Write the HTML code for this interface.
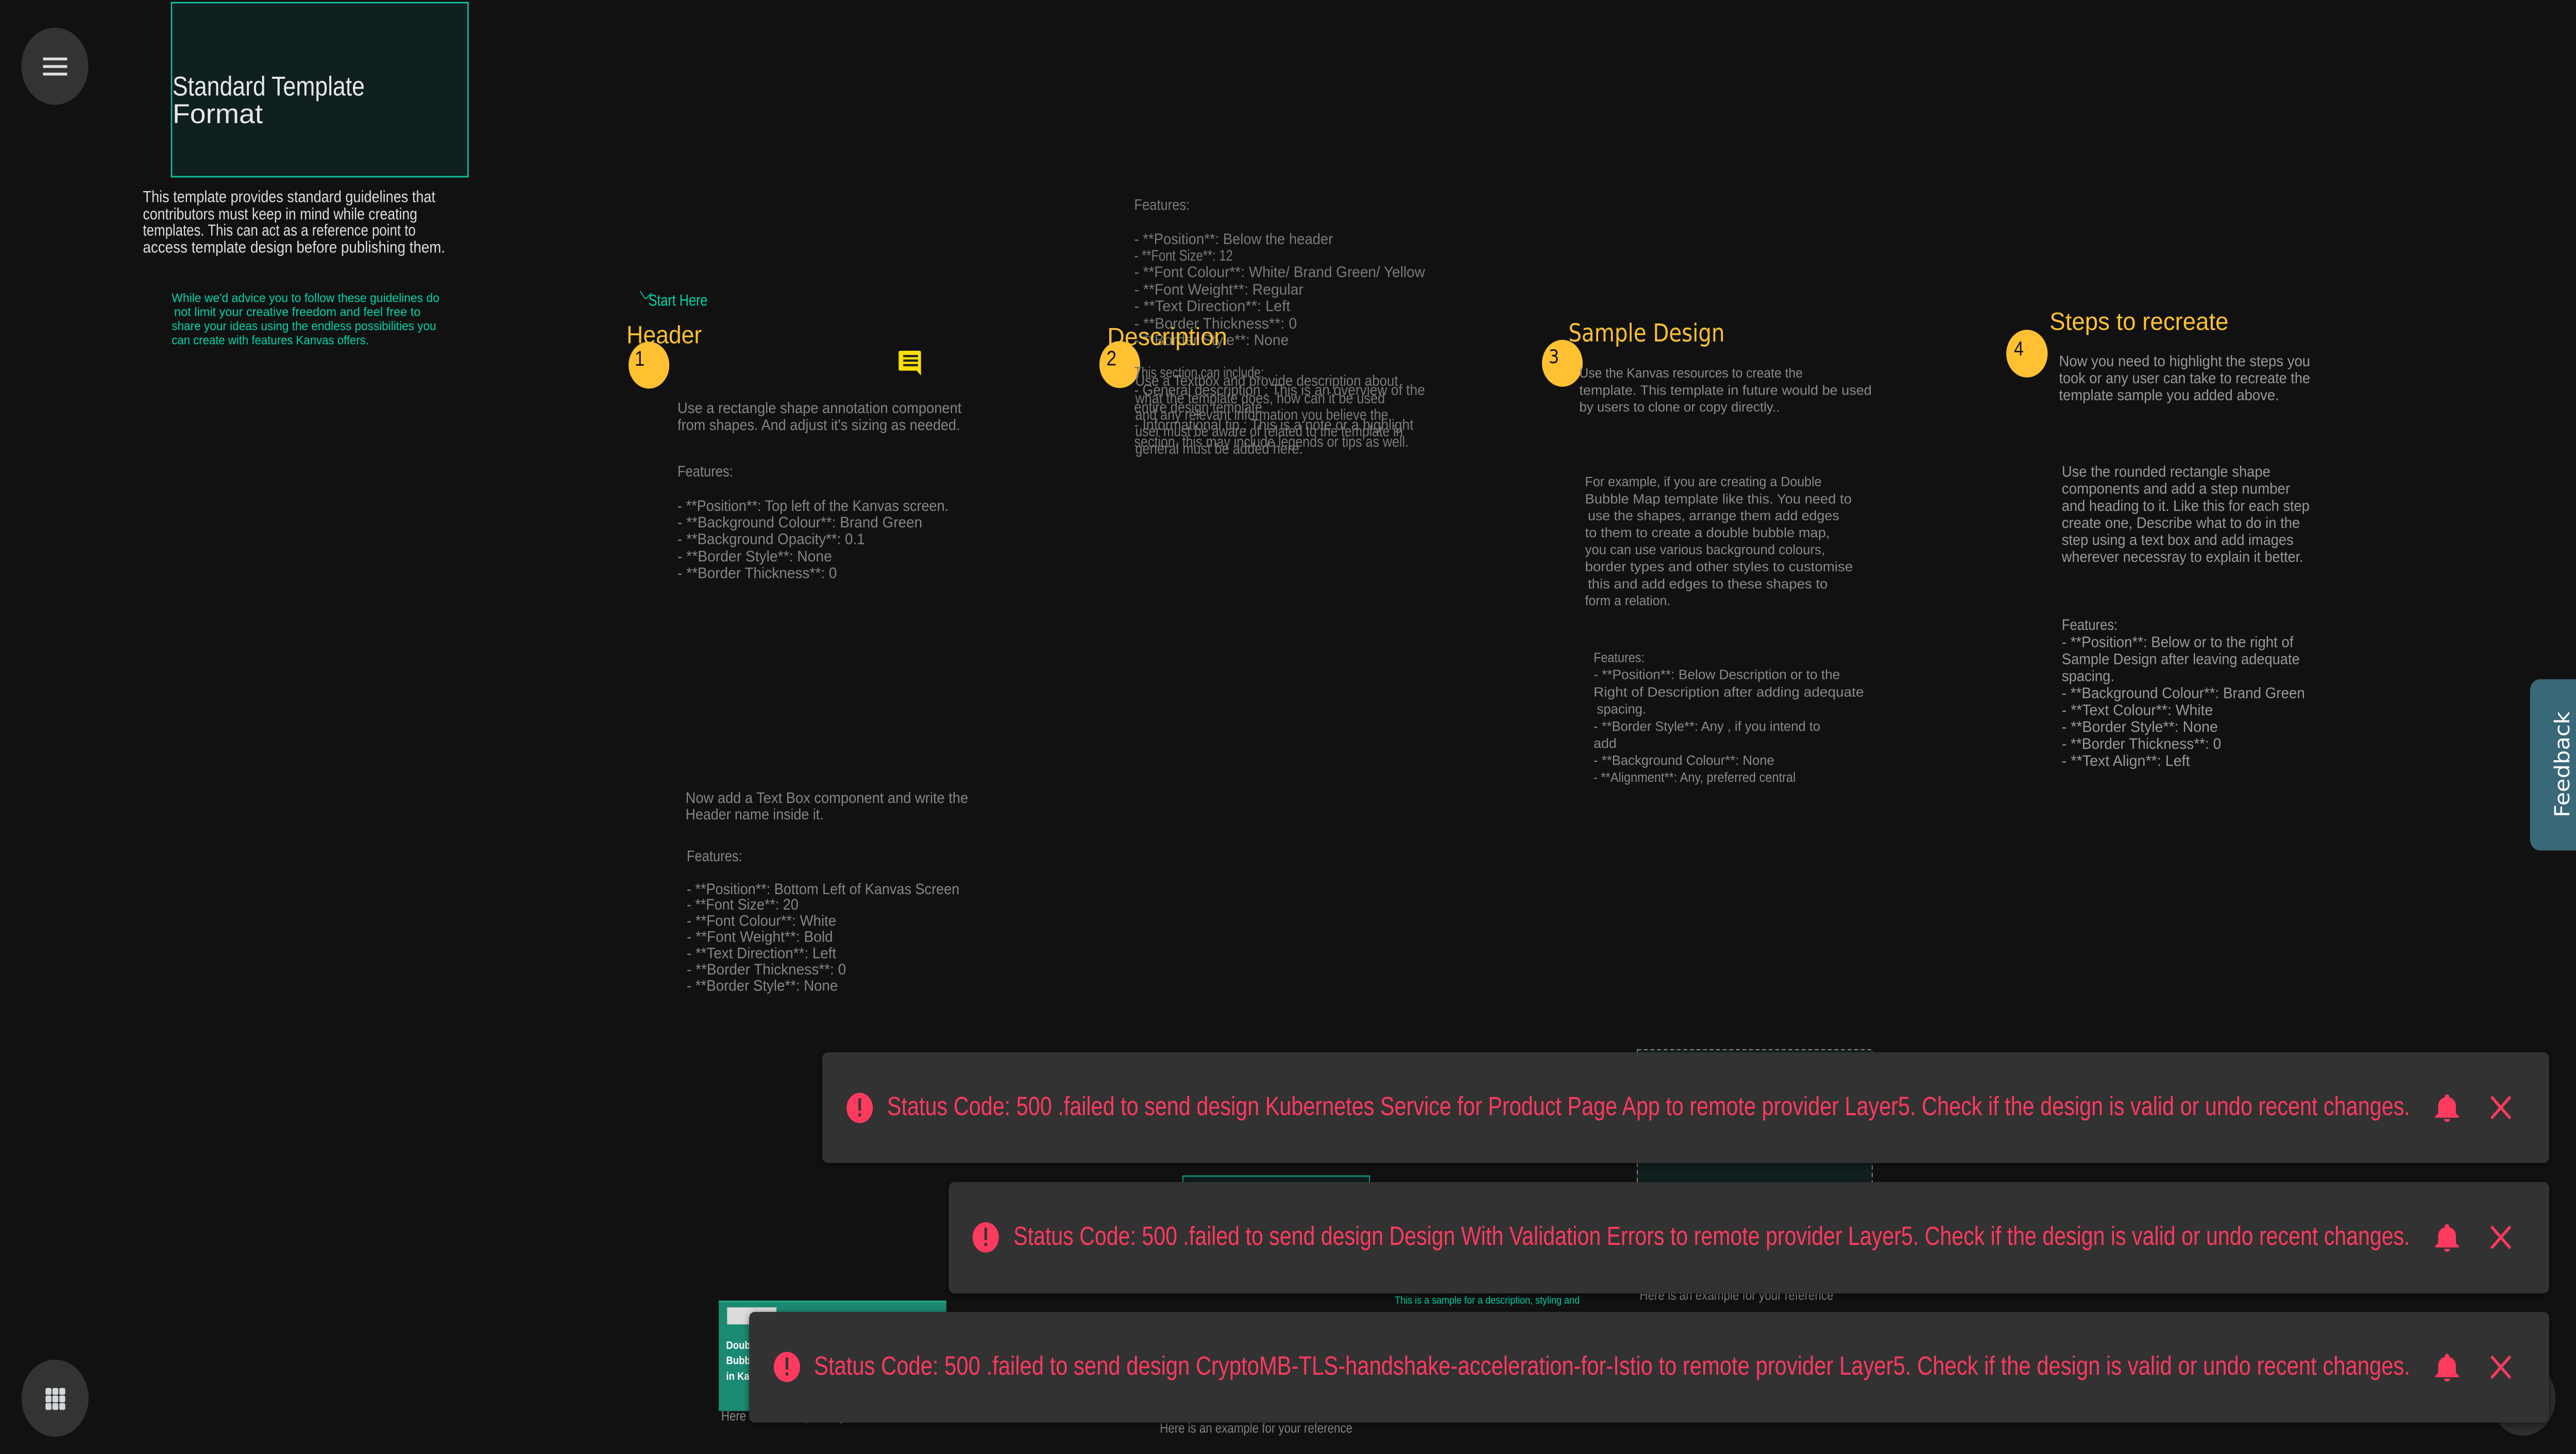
<!DOCTYPE html>
<html><head><meta charset="utf-8"><style>
html,body{margin:0;padding:0;background:#111111;width:100%;height:100%;overflow:hidden}
svg{display:block;width:100vw;height:100vh}
text{font-family:"Liberation Sans",sans-serif}
.g{fill:#858585;font-size:8px}
.gd{fill:#7a7a7a;font-size:8px}
.dj{font-family:"DejaVu Sans",sans-serif;fill:#8a8a8a;font-size:7px}
.y{fill:#ffc132;font-size:13px}
.t{fill:#ff3a5f;font-size:14px}
</style></head><body>
<svg viewBox="0 0 1568 768.5" preserveAspectRatio="none" xmlns="http://www.w3.org/2000/svg">
<rect width="1568" height="768.5" fill="#111111"/>

<circle cx="33.4" cy="35" r="20.4" fill="#333333"/>
<rect x="26.2" y="30.4" width="14.7" height="1.5" fill="#dddddd"/>
<rect x="26.2" y="34.4" width="14.7" height="1.5" fill="#dddddd"/>
<rect x="26.2" y="38.4" width="14.7" height="1.5" fill="#dddddd"/>

<rect x="104.4" y="1.4" width="180.5" height="92" fill="#10201f" stroke="#14c2a0" stroke-width="0.8"/>
<text x="105" y="50.5" fill="#e8e8e8" font-size="14.5" textLength="117" lengthAdjust="spacingAndGlyphs">Standard Template</text>
<text x="105" y="65" fill="#e8e8e8" font-size="14.5" textLength="55" lengthAdjust="spacingAndGlyphs">Format</text>

<g fill="#dddddd" font-size="8.5">
<text x="87" y="106.8" textLength="178" lengthAdjust="spacingAndGlyphs">This template provides standard guidelines that</text>
<text x="87" y="116" textLength="167" lengthAdjust="spacingAndGlyphs">contributors must keep in mind while creating</text>
<text x="87" y="124.5" textLength="166" lengthAdjust="spacingAndGlyphs">templates. This can act as a reference point to</text>
<text x="87" y="133.5" textLength="184" lengthAdjust="spacingAndGlyphs">access template design before publishing them.</text>
</g>
<g fill="#00d3a9" font-size="6.5">
<text x="104.5" y="159.6" textLength="163" lengthAdjust="spacingAndGlyphs">While we'd advice you to follow these guidelines do</text>
<text x="106" y="167" textLength="150" lengthAdjust="spacingAndGlyphs">not limit your creative freedom and feel free to</text>
<text x="104.5" y="174.5" textLength="161" lengthAdjust="spacingAndGlyphs">share your ideas using the endless possibilities you</text>
<text x="104.5" y="182" textLength="120" lengthAdjust="spacingAndGlyphs">can create with features Kanvas offers.</text>
</g>

<polyline points="389.5,153.8 393,158 396.5,155" fill="none" stroke="#00d3a9" stroke-width="0.5"/>
<text x="394.7" y="161.6" fill="#00d3a9" font-size="8.5" textLength="36" lengthAdjust="spacingAndGlyphs">Start Here</text>

<text x="381.4" y="181.4" class="y" textLength="45.8" lengthAdjust="spacingAndGlyphs">Header</text>
<circle cx="395" cy="193" r="12.4" fill="#ffc132"/>
<text x="386.3" y="193.3" fill="#111" font-size="11">1</text>
<g>
<path d="M547.8,185.4 h12 a0.8,0.8 0 0 1 0.8,0.8 v12.3 l-2.6,-2.6 h-10.2 a0.8,0.8 0 0 1 -0.8,-0.8 v-8.9 a0.8,0.8 0 0 1 0.8,-0.8z" fill="#ffe000"/>
<rect x="549.8" y="187.6" width="9" height="1.2" fill="#222"/>
<rect x="549.8" y="190" width="9" height="1.2" fill="#222"/>
<rect x="549.8" y="192.4" width="9" height="1.2" fill="#222"/>
</g>
<g class="g">
<text x="412.4" y="218.3" textLength="172.9" lengthAdjust="spacingAndGlyphs">Use a rectangle shape annotation component</text>
<text x="412.4" y="227.3" textLength="172" lengthAdjust="spacingAndGlyphs">from shapes. And adjust it's sizing as needed.</text>
<text x="412.4" y="251.8">Features:</text>
<text x="412.4" y="270" textLength="165" lengthAdjust="spacingAndGlyphs">- **Position**: Top left of the Kanvas screen.</text>
<text x="412.4" y="278.8" textLength="149" lengthAdjust="spacingAndGlyphs">- **Background Colour**: Brand Green</text>
<text x="412.4" y="287.6" textLength="114" lengthAdjust="spacingAndGlyphs">- **Background Opacity**: 0.1</text>
<text x="412.4" y="296.7" textLength="94" lengthAdjust="spacingAndGlyphs">- **Border Style**: None</text>
<text x="412.4" y="305.6" textLength="97" lengthAdjust="spacingAndGlyphs">- **Border Thickness**: 0</text>

<text x="417.3" y="424.4" textLength="172" lengthAdjust="spacingAndGlyphs">Now add a Text Box component and write the</text>
<text x="417.3" y="433.1" textLength="84" lengthAdjust="spacingAndGlyphs">Header name inside it.</text>
<text x="418" y="455.2">Features:</text>
<text x="418" y="472.6" textLength="166" lengthAdjust="spacingAndGlyphs">- **Position**: Bottom Left of Kanvas Screen</text>
<text x="418" y="480.8" textLength="68" lengthAdjust="spacingAndGlyphs">- **Font Size**: 20</text>
<text x="418" y="489.4" textLength="91" lengthAdjust="spacingAndGlyphs">- **Font Colour**: White</text>
<text x="418" y="497.8" textLength="89" lengthAdjust="spacingAndGlyphs">- **Font Weight**: Bold</text>
<text x="418" y="506.5" textLength="91" lengthAdjust="spacingAndGlyphs">- **Text Direction**: Left</text>
<text x="418" y="515" textLength="97" lengthAdjust="spacingAndGlyphs">- **Border Thickness**: 0</text>
<text x="418" y="523.6" textLength="92" lengthAdjust="spacingAndGlyphs">- **Border Style**: None</text>
</g>

<g class="gd">
<text x="690.4" y="111">Features:</text>
<text x="690.4" y="129" textLength="121" lengthAdjust="spacingAndGlyphs">- **Position**: Below the header</text>
<text x="690.4" y="137.8" textLength="60" lengthAdjust="spacingAndGlyphs">- **Font Size**: 12</text>
<text x="690.4" y="146.5" textLength="177" lengthAdjust="spacingAndGlyphs">- **Font Colour**: White/ Brand Green/ Yellow</text>
<text x="690.4" y="155.7" textLength="103" lengthAdjust="spacingAndGlyphs">- **Font Weight**: Regular</text>
<text x="690.4" y="164.4" textLength="95" lengthAdjust="spacingAndGlyphs">- **Text Direction**: Left</text>
<text x="690.4" y="173.7" textLength="99" lengthAdjust="spacingAndGlyphs">- **Border Thickness**: 0</text>
<text x="690.4" y="182.4" textLength="94" lengthAdjust="spacingAndGlyphs">- **Border Style**: None</text>
</g>
<text x="674" y="182.4" class="y" textLength="73" lengthAdjust="spacingAndGlyphs">Description</text>
<circle cx="681.6" cy="192.7" r="12.4" fill="#ffc132"/>
<text x="673.5" y="193.1" fill="#111" font-size="11">2</text>
<g class="gd">
<text x="690.4" y="199.5" textLength="79" lengthAdjust="spacingAndGlyphs">This section can include:</text>
<text x="690.4" y="208.8" textLength="177" lengthAdjust="spacingAndGlyphs">- General description : This is an overview of  the</text>
<text x="690.4" y="217.9" textLength="78" lengthAdjust="spacingAndGlyphs">entire design template</text>
<text x="690.4" y="227.2" textLength="170" lengthAdjust="spacingAndGlyphs">- Informational tip : This is a note or a highlight</text>
<text x="690.4" y="236.2" textLength="167" lengthAdjust="spacingAndGlyphs">section, this may include legends or tips as well.</text>
<text x="691" y="203.9" textLength="160" lengthAdjust="spacingAndGlyphs">Use a Textbox and provide description about</text>
<text x="691" y="213.1" textLength="152" lengthAdjust="spacingAndGlyphs">what the template does, how can it be used</text>
<text x="691" y="221.9" textLength="154" lengthAdjust="spacingAndGlyphs">and any relevant information you believe the</text>
<text x="691" y="230.6" textLength="163" lengthAdjust="spacingAndGlyphs">user must be aware of related to the template in</text>
<text x="691" y="239.8" textLength="102" lengthAdjust="spacingAndGlyphs"> general must be added here.</text>
</g>

<text x="954.7" y="180.5" class="y" style="font-family:'DejaVu Sans',sans-serif" textLength="95.1" lengthAdjust="spacingAndGlyphs">Sample Design</text>
<circle cx="951" cy="192" r="12.4" fill="#ffc132"/>
<text x="942.7" y="191.9" fill="#111" font-size="10" style="font-family:'DejaVu Sans',sans-serif">3</text>
<g class="dj">
<text x="961.3" y="199.5" textLength="136" lengthAdjust="spacingAndGlyphs">Use the Kanvas resources to create the</text>
<text x="961.3" y="208.6" textLength="178" lengthAdjust="spacingAndGlyphs">template. This template in future would be used</text>
<text x="961.3" y="217.5" textLength="122" lengthAdjust="spacingAndGlyphs">by users to clone or copy directly..</text>
<text x="964.8" y="257" textLength="144" lengthAdjust="spacingAndGlyphs">For example, if you are creating a Double</text>
<text x="964.8" y="266.1" textLength="162.3" lengthAdjust="spacingAndGlyphs">Bubble Map template like this. You need to</text>
<text x="966.5" y="275" textLength="153" lengthAdjust="spacingAndGlyphs">use the shapes, arrange them add edges</text>
<text x="964.8" y="284" textLength="149" lengthAdjust="spacingAndGlyphs">to them to create a double bubble map,</text>
<text x="964.8" y="292.9" textLength="146" lengthAdjust="spacingAndGlyphs">you can use various background colours,</text>
<text x="964.8" y="301.9" textLength="163" lengthAdjust="spacingAndGlyphs">border types and other styles to customise</text>
<text x="966.5" y="311" textLength="146" lengthAdjust="spacingAndGlyphs">this  and add edges to these shapes to</text>
<text x="964.8" y="319.9" textLength="52" lengthAdjust="spacingAndGlyphs">form a relation.</text>
<text x="970" y="350" textLength="31" lengthAdjust="spacingAndGlyphs">Features:</text>
<text x="970" y="359" textLength="150" lengthAdjust="spacingAndGlyphs">- **Position**: Below Description or to the</text>
<text x="970" y="368.2" textLength="164.5" lengthAdjust="spacingAndGlyphs">Right of Description after adding adequate</text>
<text x="972" y="377.2" textLength="30" lengthAdjust="spacingAndGlyphs">spacing.</text>
<text x="970" y="386.3" textLength="138" lengthAdjust="spacingAndGlyphs">- **Border Style**: Any , if you intend to</text>
<text x="970" y="395.3" textLength="14" lengthAdjust="spacingAndGlyphs">add</text>
<text x="970" y="404.3" textLength="110" lengthAdjust="spacingAndGlyphs">- **Background Colour**: None</text>
<text x="970" y="413.2" textLength="123" lengthAdjust="spacingAndGlyphs">- **Alignment**: Any, preferred central</text>
</g>

<text x="1247.6" y="174.4" class="y" font-size="14" textLength="108.9" lengthAdjust="spacingAndGlyphs">Steps to recreate</text>
<circle cx="1233.8" cy="186.9" r="12.6" fill="#ffc132"/>
<text x="1225.9" y="187.9" fill="#111" font-size="10.5">4</text>
<g font-size="8" fill="#999">
<text x="1253.3" y="193.5" textLength="152.9" lengthAdjust="spacingAndGlyphs">Now you need to highlight the steps you</text>
<text x="1253.3" y="202.5" textLength="152.9" lengthAdjust="spacingAndGlyphs">took or any user can take to recreate the</text>
<text x="1253.3" y="211.5" textLength="134" lengthAdjust="spacingAndGlyphs">template sample you added above.</text>
<text x="1255" y="252" textLength="127" lengthAdjust="spacingAndGlyphs">Use the rounded rectangle shape</text>
<text x="1255" y="261" textLength="139" lengthAdjust="spacingAndGlyphs">components and add a step number</text>
<text x="1255" y="270" textLength="150.8" lengthAdjust="spacingAndGlyphs">and heading to it. Like this for each step</text>
<text x="1255" y="279" textLength="145" lengthAdjust="spacingAndGlyphs">create one, Describe what to do in the</text>
<text x="1255" y="288" textLength="141" lengthAdjust="spacingAndGlyphs">step using a text box and add images</text>
<text x="1255" y="297" textLength="147" lengthAdjust="spacingAndGlyphs">wherever necessray to explain it better.</text>
<text x="1255" y="333" textLength="34" lengthAdjust="spacingAndGlyphs">Features:</text>
<text x="1255" y="342" textLength="141" lengthAdjust="spacingAndGlyphs">- **Position**: Below or to the right of</text>
<text x="1255" y="351" textLength="144.8" lengthAdjust="spacingAndGlyphs">Sample Design after leaving adequate</text>
<text x="1255" y="360" textLength="32" lengthAdjust="spacingAndGlyphs">spacing.</text>
<text x="1255" y="369" textLength="148" lengthAdjust="spacingAndGlyphs">- **Background Colour**: Brand Green</text>
<text x="1255" y="378" textLength="92" lengthAdjust="spacingAndGlyphs">- **Text Colour**: White</text>
<text x="1255" y="386.8" textLength="95" lengthAdjust="spacingAndGlyphs">- **Border Style**: None</text>
<text x="1255" y="395.8" textLength="97" lengthAdjust="spacingAndGlyphs">- **Border Thickness**: 0</text>
<text x="1255" y="404.8" textLength="78" lengthAdjust="spacingAndGlyphs">- **Text Align**: Left</text>
</g>

<path d="M1568,359 L1546,359 a6,6 0 0 0 -6,6 L1540,443.5 a6,6 0 0 0 6,6 L1568,449.5 Z" fill="#396878"/>
<text transform="translate(1564,432) rotate(-90)" fill="#ffffff" font-size="12.5" style="font-family:'DejaVu Sans',sans-serif" textLength="56" lengthAdjust="spacingAndGlyphs">Feedback</text>

<rect x="996.6" y="554.8" width="143" height="80" fill="#10201f" stroke="#888" stroke-width="0.6" stroke-dasharray="2.4,1.6"/>
<rect x="720" y="621.6" width="113.6" height="30" fill="#0f1f1e" stroke="#14a88c" stroke-width="0.6"/>
<text x="998" y="687" fill="#888" font-size="7" textLength="118" lengthAdjust="spacingAndGlyphs">Here is an example for your reference</text>
<text x="849" y="689" fill="#00d3a9" font-size="5.5" textLength="112.5" lengthAdjust="spacingAndGlyphs">This is a sample for a description, styling and</text>
<rect x="437.5" y="687.4" width="138.5" height="58.4" fill="#1b8a72"/>
<rect x="437.5" y="687.4" width="138.5" height="1" fill="#22a585"/>
<rect x="442.6" y="691" width="30" height="9" fill="#dcdcdc"/>
<g fill="#ffffff" font-size="5.8" font-weight="bold">
<text x="442" y="713">Double</text>
<text x="442" y="721">Bubble</text>
<text x="442" y="729.3">in Kanvas</text>
</g>
<text x="439" y="750.8" fill="#888" font-size="7">Here is an example for your reference</text>
<text x="706" y="757.2" fill="#888" font-size="7" textLength="117.2" lengthAdjust="spacingAndGlyphs">Here is an example for your reference</text>

<circle cx="33.5" cy="739" r="20.4" fill="#333333"/>
<g fill="#d3d8db">
<rect x="27.7" y="733.6" width="3.6" height="3.6" rx="0.8"/><rect x="31.9" y="733.6" width="3.6" height="3.6" rx="0.8"/><rect x="36.1" y="733.6" width="3.6" height="3.6" rx="0.8"/>
<rect x="27.7" y="737.6" width="3.6" height="3.6" rx="0.8"/><rect x="31.9" y="737.6" width="3.6" height="3.6" rx="0.8"/><rect x="36.1" y="737.6" width="3.6" height="3.6" rx="0.8"/>
<rect x="27.7" y="741.6" width="3.6" height="3.6" rx="0.8"/><rect x="31.9" y="741.6" width="3.6" height="3.6" rx="0.8"/><rect x="36.1" y="741.6" width="3.6" height="3.6" rx="0.8"/>
</g>
<circle cx="1535.7" cy="739" r="19.8" fill="#2e2e2e"/>

<defs>
<filter id="sh" x="-5%" y="-30%" width="110%" height="160%"><feDropShadow dx="0" dy="1" stdDeviation="2" flood-color="#000" flood-opacity="0.5"/></filter>
<g id="bell"><path transform="translate(1478.7,576.5) scale(0.9,0.75)" d="M12 22c1.1 0 2-.9 2-2h-4c0 1.1.89 2 2 2zm6-6v-5c0-3.07-1.64-5.64-4.5-6.32V4c0-.83-.67-1.5-1.5-1.5s-1.5.67-1.5 1.5v.68C7.630 5.36 6 7.92 6 11v5l-2 2v1h16v-1l-2-2z" fill="#ff3a5f"/>
<path d="M1516.5,579.7 L1528,591.1 M1528,579.7 L1516.5,591.1" stroke="#ff3a5f" stroke-width="1.6"/></g>
</defs>

<rect x="500.5" y="556.2" width="1051.2" height="58.5" rx="3.4" fill="#333333" filter="url(#sh)"/>
<circle cx="523.3" cy="585.6" r="8" fill="#ff3a5f"/>
<rect x="522.5" y="580.5" width="1.6" height="6.5" fill="#333"/><rect x="522.5" y="588.5" width="1.6" height="1.6" fill="#333"/>
<text x="540" y="589.4" class="t" textLength="927" lengthAdjust="spacingAndGlyphs">Status Code: 500 .failed to send design Kubernetes Service for Product Page App to remote provider Layer5. Check if the design is valid or undo recent changes.</text>
<use href="#bell"/>

<rect x="577.5" y="624.8" width="974.2" height="58.8" rx="3.4" fill="#333333" filter="url(#sh)"/>
<circle cx="600" cy="654" r="8" fill="#ff3a5f"/>
<rect x="599.2" y="648.9" width="1.6" height="6.5" fill="#333"/><rect x="599.2" y="656.9" width="1.6" height="1.6" fill="#333"/>
<text x="616.9" y="658" class="t" textLength="850" lengthAdjust="spacingAndGlyphs">Status Code: 500 .failed to send design Design With Validation Errors to remote provider Layer5. Check if the design is valid or undo recent changes.</text>
<use href="#bell" transform="translate(0,68.6)"/>

<rect x="456" y="693.4" width="1095.7" height="58.5" rx="3.4" fill="#333333" filter="url(#sh)"/>
<circle cx="479" cy="722.5" r="8" fill="#ff3a5f"/>
<rect x="478.2" y="717.4" width="1.6" height="6.5" fill="#333"/><rect x="478.2" y="725.4" width="1.6" height="1.6" fill="#333"/>
<text x="495.5" y="726.6" class="t" textLength="971.5" lengthAdjust="spacingAndGlyphs">Status Code: 500 .failed to send design CryptoMB-TLS-handshake-acceleration-for-Istio to remote provider Layer5. Check if the design is valid or undo recent changes.</text>
<use href="#bell" transform="translate(0,137.2)"/>
</svg>
</body></html>
